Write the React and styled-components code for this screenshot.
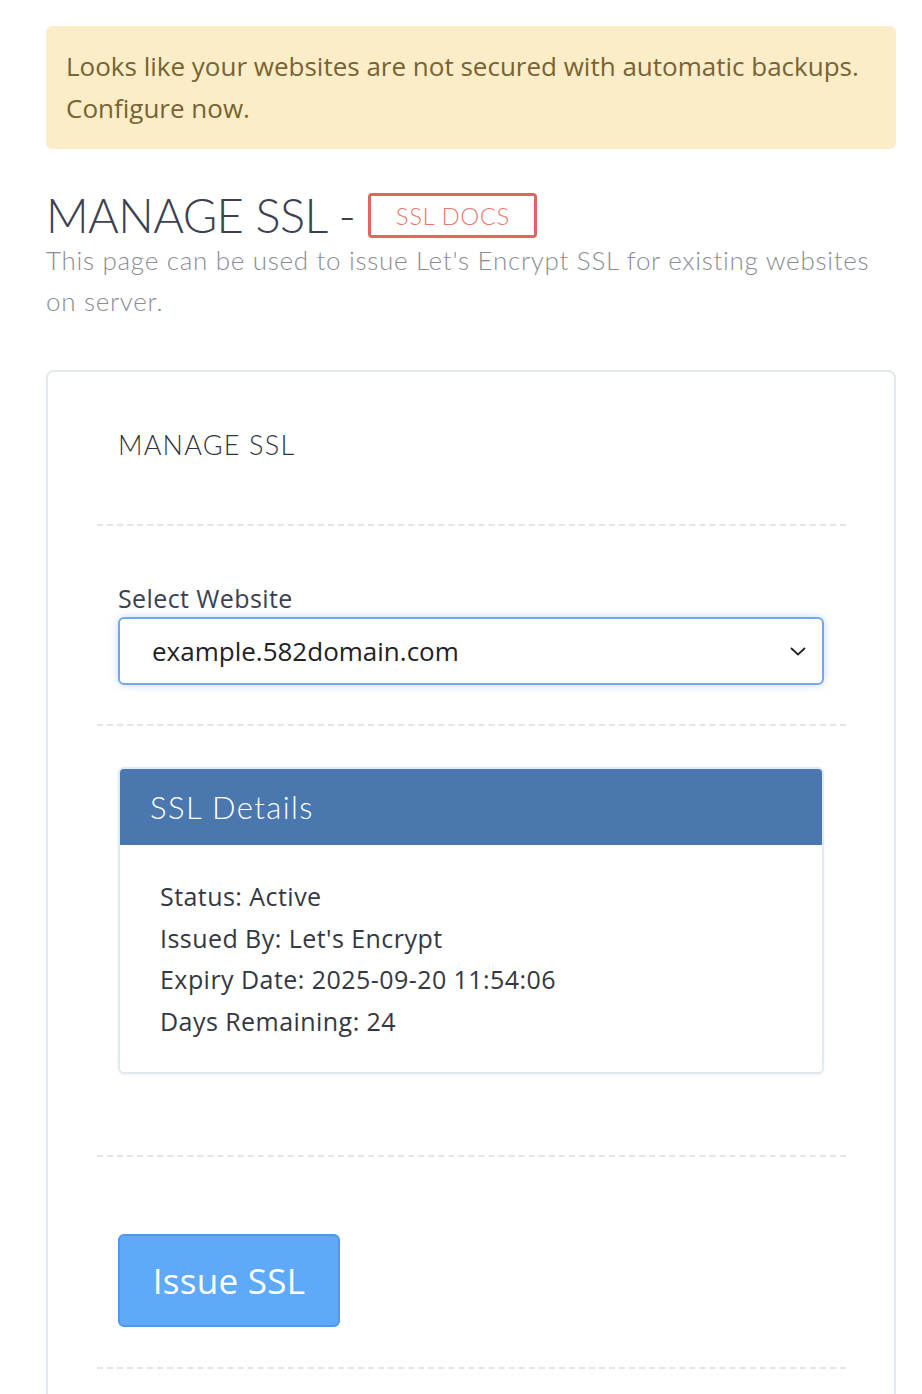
import styled, { createGlobalStyle } from 'styled-components';

const GlobalStyle = createGlobalStyle`
  body {
    margin: 0;
    background: #ffffff;
    font-family: 'Open Sans', 'Liberation Sans', sans-serif;
  }
`;

const Page = styled.div`
  padding: 26px 26px 0 46px;
`;

const Alert = styled.div`
  padding: 19px 20px 20px;
  background-color: #fcedc9;
  border-radius: 6px;
  color: #786332;
  font-size: 26px;
  line-height: 42px;
  letter-spacing: 0;
`;

const TitleRow = styled.div`
  display: flex;
  align-items: center;
  gap: 13px;
  margin-top: 41px;
`;

const Title = styled.h1`
  margin: 0;
  font-family: Lato, 'Open Sans', sans-serif;
  font-weight: 300;
  font-size: 47px;
  line-height: 50px;
  letter-spacing: -0.6px;
  color: #3b4150;
`;

const DocsButton = styled.a`
  display: flex;
  align-items: center;
  justify-content: center;
  width: 163px;
  height: 39px;
  border: 3px solid #e4655f;
  border-radius: 4px;
  color: #e87a74;
  font-family: Lato, 'Open Sans', sans-serif;
  font-weight: 300;
  font-size: 24px;
  letter-spacing: 0.5px;
  text-decoration: none;
`;

const Subtitle = styled.p`
  margin: 0;
  font-family: Lato, 'Open Sans', sans-serif;
  font-weight: 300;
  font-size: 26px;
  line-height: 41px;
  letter-spacing: 0.7px;
  color: #8a8d93;
`;

const Card = styled.div`
  margin-top: 48px;
  border: 2px solid #e3e7ee;
  border-bottom: none;
  border-radius: 8px 8px 0 0;
  padding: 0 48px 0 49px;
`;

const Section = styled.div`
  padding: ${(props) => props.pad};
  border-top: ${(props) => (props.first ? 'none' : '2px dashed #e2e5ea')};
`;

const CardTitle = styled.h2`
  margin: 0 21px;
  font-family: Lato, 'Open Sans', sans-serif;
  font-weight: 300;
  font-size: 27px;
  line-height: 30px;
  letter-spacing: 1.2px;
  color: #2f3440;
`;

const Label = styled.label`
  display: block;
  margin-bottom: 4px;
  font-size: 25px;
  line-height: 30px;
  color: #3b4150;
  letter-spacing: 0.4px;
`;

const SelectBox = styled.div`
  display: flex;
  align-items: center;
  justify-content: space-between;
  height: 64px;
  padding: 0 14px 0 32px;
  border: 2px solid #74a6ec;
  border-radius: 6px;
  box-shadow: 0 0 8px rgba(110, 165, 240, 0.4);
  font-size: 26px;
  color: #222222;
  letter-spacing: 0;
`;

const Inner = styled.div`
  margin: 0 22px 0 21px;
`;

const DetailsCard = styled.div`
  border: 2px solid #e3e7ee;
  border-radius: 6px;
  overflow: hidden;
  box-shadow: 0 1px 3px rgba(0, 0, 0, 0.06);
`;

const DetailsHeader = styled.div`
  height: 76px;
  display: flex;
  align-items: center;
  padding-left: 30px;
  background-color: #4a77ae;
  color: #ffffff;
  font-family: Lato, 'Open Sans', sans-serif;
  font-weight: 300;
  font-size: 31px;
  letter-spacing: 1.4px;
`;

const DetailsBody = styled.div`
  padding: 31px 40px 30px;
`;

const DetailLine = styled.div`
  font-size: 25px;
  line-height: 41.5px;
  color: #333842;
  letter-spacing: 0.45px;
`;

const IssueButton = styled.button`
  width: 222px;
  height: 93px;
  border: 2px solid #4b98ef;
  border-radius: 6px;
  background-color: #5eaaf8;
  color: #ffffff;
  font-family: 'Open Sans', sans-serif;
  font-size: 35px;
  letter-spacing: 0.3px;
  cursor: pointer;
`;

const details = [
  'Status: Active',
  "Issued By: Let's Encrypt",
  'Expiry Date: 2025-09-20 11:54:06',
  'Days Remaining: 24',
];

const App = () => {
  return (
    <Page>
      <GlobalStyle />
      <Alert>
        Looks like your websites are not secured with automatic backups.
        <br />
        Configure now.
      </Alert>
      <TitleRow>
        <Title>MANAGE SSL -</Title>
        <DocsButton href="#">SSL DOCS</DocsButton>
      </TitleRow>
      <Subtitle>
        This page can be used to issue Let's Encrypt SSL for existing websites
        on server.
      </Subtitle>
      <Card>
        <Section first pad="58px 0 64px">
          <CardTitle>MANAGE SSL</CardTitle>
        </Section>
        <Section pad="57px 0 39px">
          <Inner>
            <Label>Select Website</Label>
            <SelectBox>
              <span>example.582domain.com</span>
              <svg width="20" height="20" viewBox="0 0 20 20">
                <polyline
                  points="3,7 10,13.5 17,7"
                  fill="none"
                  stroke="#222"
                  strokeWidth="1.8"
                />
              </svg>
            </SelectBox>
          </Inner>
        </Section>
        <Section pad="41px 0 81px">
          <Inner>
            <DetailsCard>
              <DetailsHeader>SSL Details</DetailsHeader>
              <DetailsBody>
                {details.map((line) => (
                  <DetailLine key={line}>{line}</DetailLine>
                ))}
              </DetailsBody>
            </DetailsCard>
          </Inner>
        </Section>
        <Section pad="77px 0 40px">
          <Inner>
            <IssueButton>Issue SSL</IssueButton>
          </Inner>
        </Section>
        <Section pad="60px 0" />
      </Card>
    </Page>
  );
};

export default App;
